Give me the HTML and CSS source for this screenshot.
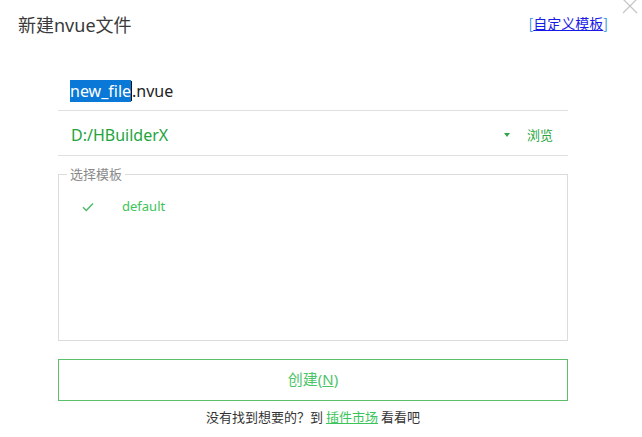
FILE: index.html
```html
<!DOCTYPE html>
<html lang="zh-CN">
<head>
<meta charset="utf-8">
<title>新建nvue文件</title>
<link rel="stylesheet" href="styles.css">
</head>
<body>
<div class="dialog">
  <header class="header">
    <h1 class="title">新建nvue文件</h1>
    <a class="custom-link" href="#"><span class="bracket">[</span><span class="custom-text">自定义模板</span><span class="bracket">]</span></a>
    <span class="close" aria-label="关闭">
      <svg width="16" height="16" viewBox="0 0 16 16"><path d="M1 1 L15 15 M15 1 L1 15" stroke="#c4c4c4" stroke-width="1.2" fill="none"/></svg>
    </span>
  </header>

  <main class="form">
    <div class="row name-row">
      <span class="name"><span class="selected">new_file</span><span class="caret"></span>.nvue</span>
    </div>
    <div class="row path-row">
      <span class="path">D:/HBuilderX</span>
      <span class="path-actions">
        <span class="arrow"></span>
        <span class="browse">浏览</span>
      </span>
    </div>

    <fieldset class="templates">
      <legend class="legend">选择模板</legend>
      <div class="template-list">
        <div class="template-item">
          <svg class="check" width="12" height="10" viewBox="0 0 12 10"><path d="M1 5.2 L4.3 8.4 L11 1.4" stroke="#4cb868" stroke-width="1.4" fill="none"/></svg>
          <span class="template-name">default</span>
        </div>
      </div>
    </fieldset>

    <button class="create" type="button">创建(<u>N</u>)</button>

    <p class="footer">没有找到想要的？到 <a class="market" href="#">插件市场</a> 看看吧</p>
  </main>
</div>
</body>
</html>
```

FILE: styles.css
```css
html, body {
  margin: 0;
  padding: 0;
  background: #ffffff;
}

body {
  font-family: "Noto Sans", "Noto Sans CJK SC", sans-serif;
  color: #333333;
}

.dialog {
  position: relative;
  width: 642px;
  height: 437px;
  overflow: hidden;
}

.header {
  display: flex;
  align-items: flex-start;
  justify-content: space-between;
  height: 66px;
  padding: 0 34px 0 18px;
  box-sizing: border-box;
}

.title {
  margin: 13px 0 0 0;
  font-size: 18px;
  font-weight: normal;
  line-height: 24px;
  color: #3a3a3a;
}

.custom-link {
  margin-top: 13px;
  font-size: 14px;
  line-height: 20px;
  text-decoration: none;
  font-family: "Noto Sans CJK SC", sans-serif;
}

.bracket {
  color: #2b8fe0;
}

.custom-text {
  color: #1a1ae6;
  text-decoration: underline;
}

.close {
  position: absolute;
  top: -3px;
  right: 4px;
  width: 16px;
  height: 16px;
}

.form {
  margin: 0 74px 0 58px;
}

.row {
  display: flex;
  align-items: center;
  justify-content: space-between;
  border-bottom: 1px solid #e0e0e0;
  line-height: 20px;
}

.name-row {
  padding: 15px 0 9px 12px;
}

.name {
  font-size: 16px;
  color: #222222;
}

.selected {
  background: #0a78d7;
  color: #ffffff;
}

.caret {
  display: inline-block;
  width: 1px;
  height: 20px;
  background: #111111;
  vertical-align: top;
}

.path-row {
  padding: 14px 15px 10px 13px;
}

.path {
  font-size: 16px;
  color: #22a53c;
}

.path-actions {
  display: flex;
  align-items: center;
  gap: 17px;
}

.arrow {
  width: 0;
  height: 0;
  border-left: 3px solid transparent;
  border-right: 3px solid transparent;
  border-top: 4px solid #2fa84a;
}

.browse {
  font-size: 13px;
  color: #2aa640;
  font-family: "Noto Sans CJK SC", sans-serif;
}

.templates {
  margin: 10px 0 0 0;
  padding: 0;
  border: 1px solid #dcdcdc;
  min-width: 0;
}

.legend {
  margin-left: 8px;
  padding: 0 3px;
  font-size: 13px;
  line-height: 16px;
  color: #8a8a8a;
  font-family: "Noto Sans CJK SC", sans-serif;
}

.template-list {
  height: 158px;
  box-sizing: border-box;
  padding-top: 16px;
}

.template-item {
  display: flex;
  align-items: center;
  line-height: 17px;
  padding-left: 23px;
}

.check {
  display: block;
}

.template-name {
  margin-left: 28px;
  font-size: 13px;
  color: #3cc45a;
}

.create {
  display: block;
  width: 100%;
  height: 42px;
  margin-top: 18px;
  background: #ffffff;
  border: 1px solid #5cbf6a;
  color: #4cc468;
  font-size: 15px;
  font-family: "Noto Sans", "Noto Sans CJK SC", sans-serif;
  padding: 0 0 3px 0;
}

.footer {
  margin: 6px 0 0 0;
  text-align: center;
  font-size: 13px;
  line-height: 20px;
  color: #333333;
  font-family: "Noto Sans CJK SC", sans-serif;
}

.market {
  color: #3cc35a;
  text-decoration: underline;
}
```
